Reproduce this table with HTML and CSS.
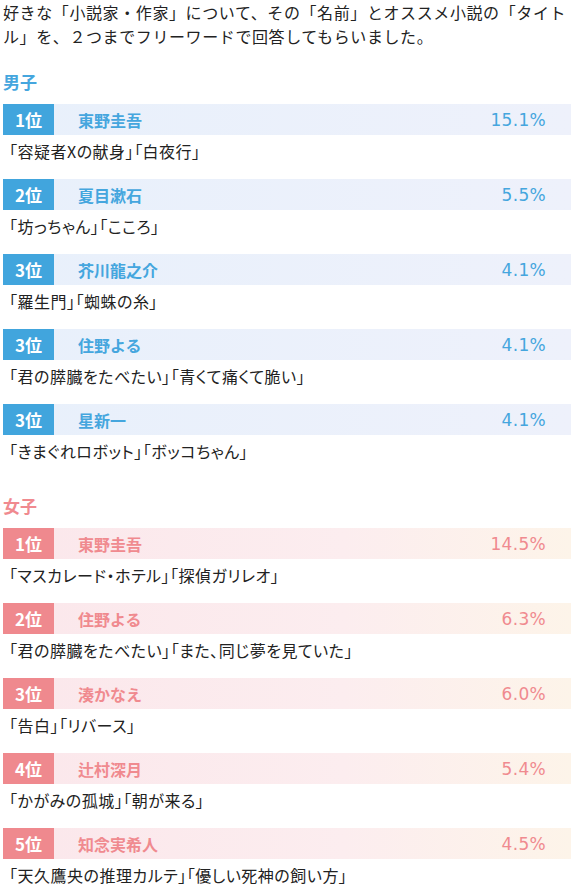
FILE: index.html
```html
<!DOCTYPE html>
<html lang="ja">
<head>
<meta charset="utf-8">
<link rel="stylesheet" href="styles.css">
</head>
<body>
<div class="page">
  <p class="intro">好きな「小説家・作家」について、その「名前」とオススメ小説の「タイトル」を、２つまでフリーワードで回答してもらいました。</p>

  <section class="group boys">
    <h2 class="group-title">男子</h2>
    <div class="item">
      <div class="bar"><span class="rank">1位</span><span class="name">東野圭吾</span><span class="pct">15.1%</span></div>
      <p class="works">「容疑者Xの献身」「白夜行」</p>
    </div>
    <div class="item">
      <div class="bar"><span class="rank">2位</span><span class="name">夏目漱石</span><span class="pct">5.5%</span></div>
      <p class="works">「坊っちゃん」「こころ」</p>
    </div>
    <div class="item">
      <div class="bar"><span class="rank">3位</span><span class="name">芥川龍之介</span><span class="pct">4.1%</span></div>
      <p class="works">「羅生門」「蜘蛛の糸」</p>
    </div>
    <div class="item">
      <div class="bar"><span class="rank">3位</span><span class="name">住野よる</span><span class="pct">4.1%</span></div>
      <p class="works">「君の膵臓をたべたい」「青くて痛くて脆い」</p>
    </div>
    <div class="item">
      <div class="bar"><span class="rank">3位</span><span class="name">星新一</span><span class="pct">4.1%</span></div>
      <p class="works">「きまぐれロボット」「ボッコちゃん」</p>
    </div>
  </section>

  <section class="group girls">
    <h2 class="group-title">女子</h2>
    <div class="item">
      <div class="bar"><span class="rank">1位</span><span class="name">東野圭吾</span><span class="pct">14.5%</span></div>
      <p class="works">「マスカレード・ホテル」「探偵ガリレオ」</p>
    </div>
    <div class="item">
      <div class="bar"><span class="rank">2位</span><span class="name">住野よる</span><span class="pct">6.3%</span></div>
      <p class="works">「君の膵臓をたべたい」「また、同じ夢を見ていた」</p>
    </div>
    <div class="item">
      <div class="bar"><span class="rank">3位</span><span class="name">湊かなえ</span><span class="pct">6.0%</span></div>
      <p class="works">「告白」「リバース」</p>
    </div>
    <div class="item">
      <div class="bar"><span class="rank">4位</span><span class="name">辻村深月</span><span class="pct">5.4%</span></div>
      <p class="works">「かがみの孤城」「朝が来る」</p>
    </div>
    <div class="item">
      <div class="bar"><span class="rank">5位</span><span class="name">知念実希人</span><span class="pct">4.5%</span></div>
      <p class="works">「天久鷹央の推理カルテ」「優しい死神の飼い方」</p>
    </div>
  </section>
</div>
</body>
</html>
```

FILE: styles.css
```css
html, body {
  margin: 0;
  padding: 0;
  background: #ffffff;
}

body {
  font-family: "Noto Sans CJK JP", "Noto Sans", sans-serif;
  color: #222222;
}

.page {
  padding: 0 3px;
}

.intro {
  margin: 0;
  font-size: 16px;
  line-height: 24px;
  letter-spacing: 0.6px;
}

.group-title {
  margin: 0;
  font-size: 17px;
  font-weight: bold;
  line-height: 24px;
}

.boys .group-title {
  margin-top: 22px;
  margin-bottom: 10px;
  color: #45a6de;
}

.girls .group-title {
  margin-top: 15px;
  margin-bottom: 10px;
  color: #f08a8f;
}

.item {
  display: flex;
  flex-direction: column;
}

.bar {
  display: flex;
  align-items: center;
  height: 31px;
}

.boys .bar {
  background: linear-gradient(90deg, #e8f0fb, #eef1fb);
}

.girls .bar {
  background: linear-gradient(90deg, #fbe7eb, #fcedef 60%, #fdf4e9);
}

.rank {
  width: 51px;
  height: 31px;
  display: flex;
  align-items: center;
  justify-content: center;
  color: #ffffff;
  font-weight: bold;
  font-size: 17px;
}

.boys .rank {
  background: #41a5dd;
}

.girls .rank {
  background: #ef898e;
}

.name {
  margin-left: 24px;
  font-size: 16px;
  font-weight: bold;
  flex: 1;
}

.boys .name,
.boys .pct {
  color: #45a6de;
}

.girls .name,
.girls .pct {
  color: #f08a8f;
}

.pct {
  padding-right: 25px;
  font-family: "DejaVu Sans", sans-serif;
  font-size: 17px;
  letter-spacing: 0.3px;
}

.works {
  margin: 3px 0 15px;
  padding-left: 6px;
  font-size: 16px;
  line-height: 26px;
  letter-spacing: 0.5px;
  font-feature-settings: "palt";
}
```
